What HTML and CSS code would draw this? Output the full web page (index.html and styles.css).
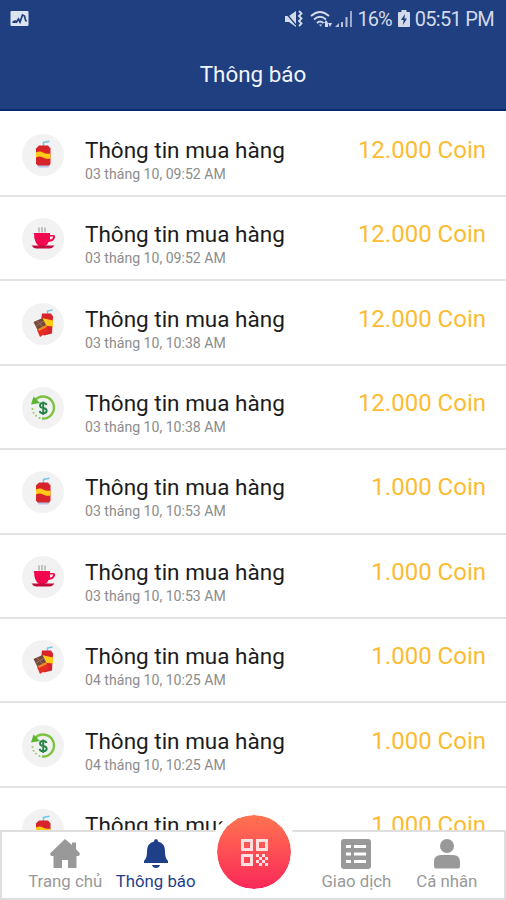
FILE: index.html
```html
<!DOCTYPE html>
<html lang="vi">

<head>
    <meta charset="UTF-8">
    <meta name="viewport" content="width=device-width, initial-scale=1.0">
    <title>Thông báo</title>
    <link rel="stylesheet" href="styles.css">
</head>

<body>
    <svg class="sprite">
        <symbol id="can" viewBox="0 0 42 42">
            <path d="M21.500 12V8.500l6-1.200" fill="none" stroke="#72c7e8" stroke-width="1.600" />
            <path d="M17 11.500h9l2.500 3v15l-1.500 2.500H16l-2-2.500v-15z" fill="#d8232a" />
            <path d="M14 18.500q4-2 7 0t7.500 1v5q-4 1-7.500-1t-7 0z" fill="#ffcb18" />
            <path d="M15.500 31.500h12l-1 2h-10z" fill="#b9c5e8" />
        </symbol>
        <symbol id="cup" viewBox="0 0 42 42">
            <path d="M17 9.500v5M20 9v5.500M23 9.500v5" stroke="#b5b0b0" stroke-width="1.500" />
            <path d="M12 15h16v2h3.500q2 0 1.500 2.500-1 4-6.500 4.500-1 3-3.500 4h-6q-5-3-5-13zm16 3.500v3q3-.5 3.300-3z" fill="#f2074f" fill-rule="evenodd" />
            <path d="M9.500 27.500h23q-2 3-5 3h-13q-3 0-5-3z" fill="#c4093f" />
        </symbol>
        <symbol id="combo" viewBox="0 0 42 42">
            <path d="M25.500 11V8l5-1" fill="none" stroke="#72c7e8" stroke-width="1.400" />
            <path d="M20 10.500h9l2 3-1 17-8 2-4-5z" fill="#d8232a" />
            <path d="M20 15l11 2.500v6l-10-1z" fill="#ffcb18" />
            <path d="M11.500 19l9-4 4 8-9 4z" fill="#75483b" />
            <path d="M15 18l7 7M14 23l8-5" stroke="#a77b68" stroke-width=".8" />
            <path d="M15 27l9-4 3 5-9 6z" fill="#e62d25" />
            <path d="M16 26l8-4 1 2-8 4z" fill="#f18b21" />
        </symbol>
        <symbol id="refund" viewBox="0 0 42 42">
            <path d="M13 13a11 11 0 1 1 7 18.500" fill="none" stroke="#7dc242" stroke-width="2.400" />
            <path d="M9 17.500l2.500-8 6.500 6.500z" fill="#5cb531" />
            <path d="M10.500 21q0 7 8 10.500" fill="none" stroke="#9ccb6a" stroke-width="1.800" stroke-dasharray="1.800 2.200" />
            <path d="M24.500 18q-.5-2-3.300-2-3.200 0-3.200 2.400 0 2 3.200 2.600 3.500.6 3.500 2.800 0 2.400-3.500 2.400-3.200 0-3.500-2.400M21.200 14.500v13.500" fill="none" stroke="#278449" stroke-width="1.900" />
        </symbol>
    </svg>

    <div class="header">
        <div class="status-bar">
            <svg class="status-chart" viewBox="0 0 18 15">
                <rect width="18" height="15" rx="1" fill="#dde4f1" />
                <path d="M2 11.500l2.500-1.500 1.500 1 2-3 1.500 3L12 4l2 1 1 4 1 1.500" fill="none" stroke="#1f3f80" stroke-width="1.700" />
            </svg>
            <div class="status-right">
                <svg class="status-mute" viewBox="0 0 19 18">
                    <path d="M1 6h4l7-5v16l-7-5H1z" fill="#d3daea" />
                    <path d="M1 2l11 13" stroke="#1f3f80" stroke-width="1.200" />
                    <path d="M15 1l2.500 2.500L15 6l2.500 2.500L15 11l2.500 2.500L15 16" fill="none" stroke="#d3daea" stroke-width="1.800" />
                </svg>
                <svg class="status-wifi" viewBox="0 0 23 18">
                    <path d="M1 6q9-8 18 0M4 9.500q6-5.500 12 0M7 13q3-3 6.500 0" fill="none" stroke="#d3daea" stroke-width="1.800" />
                    <path d="M9 14.500h3l-1.500 2zM14 13l2-3 2 3v4h-3v-4zM18 13h4l-2 4z" fill="#d3daea" />
                </svg>
                <svg class="status-signal" viewBox="0 0 18 18">
                    <path d="M0 17l4-4v4zM6 12h2v5H6zM10.500 7h2v10h-2z" fill="#b7c2da" />
                    <path d="M15 1h2v16h-2z" fill="#9aa9ca" />
                </svg>
                <span class="percent">16%</span>
                <svg class="status-battery" viewBox="0 0 12 17">
                    <path d="M3.500 0h5v2H11q1 0 1 1v13q0 1-1 1H1q-1 0-1-1V3q0-1 1-1h2.500z" fill="#d3daea" />
                    <path d="M7 4L3 10h2.500L5 15l4-6.500H6.500z" fill="#1f3f80" />
                </svg>
                <span class="time">05:51 PM</span>
            </div>
        </div>
        <h1>Thông báo</h1>
    </div>

    <div class="list">
        <div class="item">
            <svg class="item-icon"><use href="#can" /></svg>
            <div class="item-info">
                <h3>Thông tin mua hàng</h3>
                <p>03 tháng 10, 09:52 AM</p>
            </div>
            <span class="amount">12.000 Coin</span>
        </div>
        <div class="item">
            <svg class="item-icon"><use href="#cup" /></svg>
            <div class="item-info">
                <h3>Thông tin mua hàng</h3>
                <p>03 tháng 10, 09:52 AM</p>
            </div>
            <span class="amount">12.000 Coin</span>
        </div>
        <div class="item">
            <svg class="item-icon"><use href="#combo" /></svg>
            <div class="item-info">
                <h3>Thông tin mua hàng</h3>
                <p>03 tháng 10, 10:38 AM</p>
            </div>
            <span class="amount">12.000 Coin</span>
        </div>
        <div class="item">
            <svg class="item-icon"><use href="#refund" /></svg>
            <div class="item-info">
                <h3>Thông tin mua hàng</h3>
                <p>03 tháng 10, 10:38 AM</p>
            </div>
            <span class="amount">12.000 Coin</span>
        </div>
        <div class="item">
            <svg class="item-icon"><use href="#can" /></svg>
            <div class="item-info">
                <h3>Thông tin mua hàng</h3>
                <p>03 tháng 10, 10:53 AM</p>
            </div>
            <span class="amount">1.000 Coin</span>
        </div>
        <div class="item">
            <svg class="item-icon"><use href="#cup" /></svg>
            <div class="item-info">
                <h3>Thông tin mua hàng</h3>
                <p>03 tháng 10, 10:53 AM</p>
            </div>
            <span class="amount">1.000 Coin</span>
        </div>
        <div class="item">
            <svg class="item-icon"><use href="#combo" /></svg>
            <div class="item-info">
                <h3>Thông tin mua hàng</h3>
                <p>04 tháng 10, 10:25 AM</p>
            </div>
            <span class="amount">1.000 Coin</span>
        </div>
        <div class="item">
            <svg class="item-icon"><use href="#refund" /></svg>
            <div class="item-info">
                <h3>Thông tin mua hàng</h3>
                <p>04 tháng 10, 10:25 AM</p>
            </div>
            <span class="amount">1.000 Coin</span>
        </div>
        <div class="item">
            <svg class="item-icon"><use href="#can" /></svg>
            <div class="item-info">
                <h3>Thông tin mua hàng</h3>
            </div>
            <span class="amount">1.000 Coin</span>
        </div>
    </div>

    <div class="tab-bar">
        <a class="tab">
            <svg viewBox="0 0 30 30"><path d="M15 0l7 6V3.500h4V10l4 4.500-1 2.500h-2.500v12H18v-8h-6v8H3.500V17H1l-1-2.500z" /></svg>
            <span>Trang chủ</span>
        </a>
        <a class="tab active">
            <svg viewBox="0 0 30 30"><path d="M15 0q2 0 2 2.500 7 1.500 7 10 0 7 3 9.500v2H3v-2q3-2.500 3-9.500 0-8.500 7-10Q13 0 15 0zM11 26h8q-1 3-4 3t-4-3z" /></svg>
            <span>Thông báo</span>
        </a>
        <a class="tab scan"></a>
        <a class="tab">
            <svg viewBox="0 0 30 30"><path fill-rule="evenodd" d="M3 0h24q3 0 3 3v24q0 3-3 3H3q-3 0-3-3V3q0-3 3-3zm2 6v3h5V6zm8 0v3h12V6zm-8 7.500v3h5v-3zm8 0v3h12v-3zM5 21v3h5v-3zm8 0v3h12v-3z" /></svg>
            <span>Giao dịch</span>
        </a>
        <a class="tab">
            <svg viewBox="0 0 30 30"><circle cx="15" cy="7" r="7" /><path d="M9 16h12q7 0 7 7v4q0 2.500-2 2.500H4q-2 0-2-2.500v-4q0-7 7-7z" /></svg>
            <span>Cá nhân</span>
        </a>
        <div class="scan-btn">
            <svg viewBox="0 0 27 27">
                <path fill-rule="evenodd" d="M0 0h12v12H0zm3 3v6h6V3zm12-3h12v12H15zm3 3v6h6V3zM0 15h12v12H0zm3 3v6h6v-6z" />
                <path d="M15 15h3v3h-3zm6 0h3v3h-3zm-3 3h3v3h-3zm6 0h3v3h-3zm-9 3h3v3h-3zm6 0h3v3h-3zm-3 3h3v3h-3zm6 0h3v3h-3z" />
            </svg>
        </div>
    </div>
</body>

</html>
```

FILE: styles.css
```css
* {
    margin: 0;
    padding: 0;
    box-sizing: border-box;
}

body {
    font-family: Roboto, "Noto Sans", sans-serif;
    background-color: #fff;
    height: 900px;
    display: flex;
    flex-direction: column;
    overflow: hidden;
}

.sprite {
    display: none;
}

.header {
    height: 111px;
    flex-shrink: 0;
    background-color: #1f3f80;
    border-bottom: 2px solid #082a70;
    color: #f1f4fb;
}

.status-bar {
    height: 37px;
    padding: 0 12px 0 10px;
    display: flex;
    justify-content: space-between;
    align-items: center;
    color: #d3daea;
    font-size: 20px;
    letter-spacing: -0.7px;
}

.status-chart {
    width: 19px;
    height: 15px;
}

.status-right {
    display: flex;
    align-items: center;
}

.status-mute {
    width: 19px;
    height: 18px;
    margin-right: 7px;
}

.status-wifi {
    width: 23px;
    height: 18px;
    margin-right: 2px;
}

.status-signal {
    width: 18px;
    height: 18px;
    margin-right: 5px;
}

.percent {
    letter-spacing: -1px;
}

.status-battery {
    width: 12px;
    height: 17px;
    margin: 0 5px 0 6px;
}

.header h1 {
    padding-top: 22px;
    font-size: 22.4px;
    line-height: 30px;
    font-weight: 400;
    text-align: center;
}

.list {
    flex: 1;
    overflow: hidden;
    padding-top: 1.6px;
}

.item {
    height: 84.4px;
    padding: 2px 20px 0 22px;
    display: flex;
    align-items: center;
    border-bottom: 2px solid #e3e3e3;
}

.item-icon {
    width: 42px;
    height: 42px;
    margin-right: 21px;
    border-radius: 50%;
    background-color: #f2f2f2;
}

.item-info {
    flex: 1;
    height: 60px;
    padding-top: 11px;
}

.item h3 {
    font-size: 22.5px;
    line-height: 28px;
    font-weight: 400;
    color: #1c1c1c;
}

.item p {
    font-size: 14.1px;
    line-height: 21px;
    color: #8c8c8c;
}

.amount {
    height: 60px;
    padding-top: 11px;
    font-size: 24px;
    line-height: 28px;
    color: #fbbc33;
}

.tab-bar {
    position: relative;
    height: 70px;
    flex-shrink: 0;
    padding: 0 12px 0 18px;
    display: flex;
    background-color: #fff;
    border: 2px solid #dedede;
}

.tab {
    width: 91px;
    padding-top: 7px;
    display: flex;
    flex-direction: column;
    align-items: center;
    color: #999;
    font-size: 16.8px;
    line-height: 24px;
    white-space: nowrap;
}

.tab svg {
    width: 30px;
    height: 30px;
    fill: currentColor;
}

.tab.active {
    color: #1f3f88;
}

.tab.scan {
    width: 111px;
}

/* круглая кнопка поверх панели */
.scan-btn {
    position: absolute;
    left: 208px;
    top: -24px;
    width: 88px;
    height: 88px;
    border: 7px solid #fff;
    border-radius: 50%;
    background: linear-gradient(#ff7450, #fb2859) padding-box;
    display: flex;
    align-items: center;
    justify-content: center;
}

.scan-btn svg {
    width: 27px;
    height: 27px;
    fill: #ffdfe0;
}
```
